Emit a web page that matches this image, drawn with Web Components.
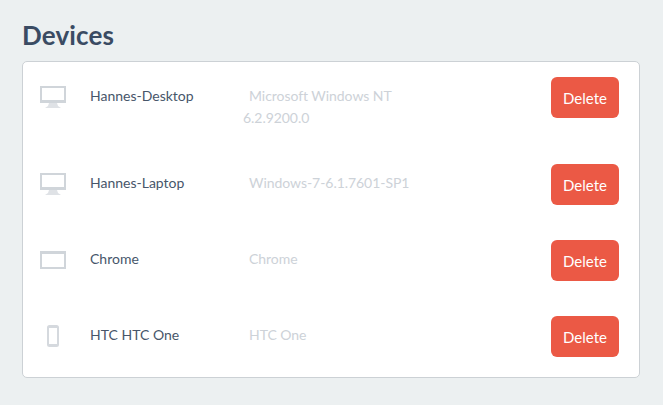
<!DOCTYPE html>
<html>
<head>
<meta charset="utf-8">
<style>
    html, body { margin: 0; height: 405px; overflow: hidden; }
    body { background: #ecf0f1; font-family: Lato, sans-serif; }
</style>
</head>
<body>
<device-page heading="Devices">
    <device-row icon="desktop" name="Hannes-Desktop" wrap>Microsoft Windows NT 6.2.9200.0</device-row>
    <device-row icon="desktop" name="Hannes-Laptop">Windows-7-6.1.7601-SP1</device-row>
    <device-row icon="browser" name="Chrome">Chrome</device-row>
    <device-row icon="phone" name="HTC HTC One">HTC One</device-row>
</device-page>

<script>
const ICONS = {
    desktop: `<svg width="26" height="22" viewBox="0 0 26 22"><path fill="#d0d5da" fill-rule="evenodd" d="M0 0h26v17H0zM2 2v12h22V2z"/><path fill="#dfe2e6" d="M9 17h8l1 3 3 2H5l3-2z"/></svg>`,
    browser: `<svg width="26" height="22" viewBox="0 0 26 22"><path fill="#d0d5da" fill-rule="evenodd" d="M0 0h26v18H0zM2 3v13h22V3z"/></svg>`,
    phone: `<svg width="26" height="22" viewBox="0 0 26 22"><path fill="#d5d9de" fill-rule="evenodd" d="M9.500 0h7a2.500 2.500 0 0 1 2.500 2.500v17a2.500 2.500 0 0 1-2.500 2.500h-7a2.500 2.500 0 0 1-2.500-2.500v-17a2.500 2.500 0 0 1 2.500-2.500zM9 3v16h8V3z"/></svg>`
};

class DevicePage extends HTMLElement {
    constructor() {
        super();
        this.attachShadow({ mode: 'open' });
        this.shadowRoot.innerHTML = `
            <style>
                :host { display: block; padding: 17px 23px 0 22px; }
                h1 { margin: 0 0 8px; font: 700 26px/36px Lato, sans-serif; letter-spacing: .15px; color: #3a4b63; }
                .card { background: #fff; border: 1px solid #ccd1d5; border-radius: 5px; }
            </style>
            <h1>${this.getAttribute('heading')}</h1>
            <div class="card"><slot></slot></div>
        `;
    }
}

class DeviceRow extends HTMLElement {
    constructor() {
        super();
        this.attachShadow({ mode: 'open' });
        const icon = ICONS[this.getAttribute('icon')];
        const iconTop = { desktop: 9, browser: 11, phone: 9 }[this.getAttribute('icon')];
        this.shadowRoot.innerHTML = `
            <style>
                :host { display: grid; grid-template-columns: 50px 153px 1fr 68px; padding: 15px 20px 0 17px; min-height: 61px; font-size: 14px; line-height: 22px; }
                :host([wrap]) { min-height: 72px; }
                .icon { line-height: 0; padding-top: ${iconTop}px; }
                .name { color: #47566a; padding-top: 8px; }
                .desc { color: #cdd2d8; padding-top: 8px; width: 175px; text-indent: 6px; letter-spacing: -.05px; }
                button { display: block; width: 68px; height: 41px; border: 0; border-radius: 6px; background: #eb5945; color: #fff; font: 400 15px Lato, sans-serif; padding: 0; }
            </style>
            <div class="icon">${icon}</div>
            <div class="name">${this.getAttribute('name')}</div>
            <div class="desc"><slot></slot></div>
            <div><button>Delete</button></div>
        `;
    }
}

customElements.define('device-page', DevicePage);
customElements.define('device-row', DeviceRow);
</script>
</body>
</html>
